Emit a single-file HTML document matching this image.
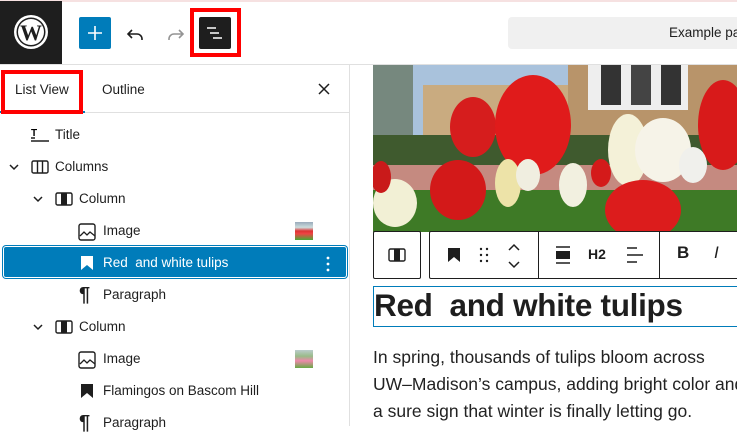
<!DOCTYPE html>
<html><head><meta charset="utf-8"><style>
*{box-sizing:border-box;margin:0;padding:0}
body{width:737px;height:426px;overflow:hidden;background:#fff;font-family:"Liberation Sans",sans-serif;color:#1e1e1e;position:relative}
.abs{position:absolute}
.row{position:absolute;left:0;width:349px;height:32px;font-size:13.5px;line-height:32px}
.row svg{position:absolute;top:8px}
.row span{position:absolute}
</style></head><body>
<div class="abs" style="left:0;top:0;width:737px;height:2px;background:#f6e1e1"></div>
<div class="abs" style="left:0;top:1px;width:62px;height:63px;background:#1e1e1e"></div>
<svg class="abs" style="left:12px;top:13px" width="38" height="38" viewBox="0 0 38 38"><circle cx="19" cy="19" r="17" fill="#fff"/><circle cx="19" cy="19" r="14.5" fill="#1e1e1e"/><circle cx="19" cy="19" r="13" fill="#fff"/><text x="19" y="27" text-anchor="middle" font-family="Liberation Serif" font-weight="bold" font-size="22" fill="#1e1e1e">W</text></svg>
<div class="abs" style="left:0;top:64px;width:737px;height:1px;background:#e0e0e0"></div>
<div class="abs" style="left:79px;top:17px;width:32px;height:32px;background:#007cba;border-radius:2px"></div>
<svg class="abs" style="left:79px;top:17px" width="32" height="32"><path d="M16 9v14M9 16h14" stroke="#fff" stroke-width="1.6"/></svg>
<svg class="abs" style="left:124px;top:22px" width="24" height="24"><path d="M8 8l-4 4 4 4M4 12h9a5 5 0 0 1 5 5v1" fill="none" stroke="#1e1e1e" stroke-width="1.6"/></svg>
<svg class="abs" style="left:163px;top:22px" width="24" height="24"><path d="M16 8l4 4-4 4M20 12h-9a5 5 0 0 0-5 5v1" fill="none" stroke="#949494" stroke-width="1.6"/></svg>
<div class="abs" style="left:190px;top:8px;width:51px;height:49px;border:4px solid #f00"></div>
<div class="abs" style="left:199px;top:17px;width:32px;height:32px;background:#1e1e1e;border-radius:2px"></div>
<svg class="abs" style="left:199px;top:17px" width="32" height="32"><path d="M8 11h9M11 16h9M14 21h9" stroke="#fff" stroke-width="1.5"/></svg>
<div class="abs" style="left:508px;top:17px;width:240px;height:32px;background:#f0f0f0;border-radius:4px;font-size:13.5px;line-height:32px;padding-left:161px;white-space:nowrap">Example page</div>
<div class="abs" style="left:349px;top:65px;width:1px;height:361px;background:#e0e0e0"></div>
<div class="abs" style="left:0;top:112px;width:349px;height:1px;background:#e0e0e0"></div>
<div class="abs" style="left:0;top:111px;width:85px;height:2px;background:#007cba"></div>
<div class="abs" style="left:1px;top:70px;width:82px;height:44px;border:4px solid #f00"></div>
<div class="abs" style="left:15px;top:82px;font-size:13.5px">List View</div>
<div class="abs" style="left:102px;top:82px;font-size:13.5px">Outline</div>
<svg class="abs" style="left:317px;top:82px" width="14" height="14"><path d="M2 2l10 10M12 2L2 12" stroke="#1e1e1e" stroke-width="1.5"/></svg>

<div class="row" style="top:119px"><svg style="left:30px" width="20" height="16"><text x="1" y="9" font-size="10" font-weight="bold" font-family="Liberation Sans">T</text><path d="M1 11h4M1 14h18" stroke="#1e1e1e" stroke-width="1.4"/></svg><span style="left:55px">Title</span></div>
<div class="row" style="top:151px"><svg style="left:8px" width="12" height="16"><path d="M2 6l4 4 4-4" fill="none" stroke="#1e1e1e" stroke-width="1.5"/></svg><svg style="left:31px" width="18" height="16"><rect x="1" y="2" width="16" height="12" rx="1.5" fill="none" stroke="#1e1e1e" stroke-width="1.4"/><path d="M6.5 2v12M11.5 2v12" stroke="#1e1e1e" stroke-width="1.4"/></svg><span style="left:55px">Columns</span></div>
<div class="row" style="top:183px"><svg style="left:32px" width="12" height="16"><path d="M2 6l4 4 4-4" fill="none" stroke="#1e1e1e" stroke-width="1.5"/></svg><svg style="left:55px" width="18" height="16"><rect x="1" y="2" width="16" height="12" rx="1.5" fill="none" stroke="#1e1e1e" stroke-width="1.4"/><rect x="6" y="2" width="6" height="12" fill="#1e1e1e"/></svg><span style="left:79px">Column</span></div>
<div class="row" style="top:215px"><svg style="left:78px" width="18" height="18"><rect x="1" y="1" width="16" height="16" rx="2" fill="none" stroke="#1e1e1e" stroke-width="1.4"/><path d="M2 13l4-4 3 3 3-3 5 4" fill="none" stroke="#1e1e1e" stroke-width="1.3"/></svg><span style="left:103px">Image</span><div class="abs" style="left:295px;top:7px;width:18px;height:18px;background:linear-gradient(#9ab 0,#cdd 30%,#d33 50%,#e44 65%,#4a3 100%)"></div></div>
<div class="abs" style="left:3px;top:246px;width:344px;height:32px;background:#007cba;border-radius:3px;box-shadow:0 0 0 1px #fff inset,0 0 0 1px #007cba"></div>
<div class="row" style="top:247px;color:#fff"><svg style="left:80px" width="14" height="16"><path d="M1 1h12v14l-6-5-6 5z" fill="#fff"/></svg><span style="left:103px">Red&nbsp; and white tulips</span><svg style="left:326px;top:9px" width="4" height="16"><circle cx="2" cy="2" r="1.4" fill="#fff"/><circle cx="2" cy="8" r="1.4" fill="#fff"/><circle cx="2" cy="14" r="1.4" fill="#fff"/></svg></div>
<div class="row" style="top:279px"><span style="left:79px;font-size:20px;font-weight:bold">¶</span><span style="left:103px">Paragraph</span></div>
<div class="row" style="top:311px"><svg style="left:32px" width="12" height="16"><path d="M2 6l4 4 4-4" fill="none" stroke="#1e1e1e" stroke-width="1.5"/></svg><svg style="left:55px" width="18" height="16"><rect x="1" y="2" width="16" height="12" rx="1.5" fill="none" stroke="#1e1e1e" stroke-width="1.4"/><rect x="6" y="2" width="6" height="12" fill="#1e1e1e"/></svg><span style="left:79px">Column</span></div>
<div class="row" style="top:343px"><svg style="left:78px" width="18" height="18"><rect x="1" y="1" width="16" height="16" rx="2" fill="none" stroke="#1e1e1e" stroke-width="1.4"/><path d="M2 13l4-4 3 3 3-3 5 4" fill="none" stroke="#1e1e1e" stroke-width="1.3"/></svg><span style="left:103px">Image</span><div class="abs" style="left:295px;top:7px;width:18px;height:18px;background:linear-gradient(#bcc 0,#9b8 35%,#e8a 60%,#6a4 100%)"></div></div>
<div class="row" style="top:375px"><svg style="left:80px" width="14" height="16"><path d="M1 1h12v14l-6-5-6 5z" fill="#1e1e1e"/></svg><span style="left:103px">Flamingos on Bascom Hill</span></div>
<div class="row" style="top:407px"><span style="left:79px;font-size:20px;font-weight:bold">¶</span><span style="left:103px">Paragraph</span></div>

<svg class="abs" style="left:373px;top:65px" width="364" height="167" viewBox="0 0 364 167">
<rect width="364" height="167" fill="#a9c2dc"/>
<rect x="50" y="20" width="314" height="80" fill="#c9ab80"/>
<rect x="195" y="0" width="169" height="100" fill="#b8946a"/>
<rect x="215" y="0" width="100" height="45" fill="#eee"/>
<rect x="228" y="0" width="20" height="40" fill="#333"/><rect x="258" y="0" width="20" height="40" fill="#444"/><rect x="288" y="0" width="20" height="40" fill="#333"/>
<rect x="0" y="0" width="40" height="90" fill="#55603f" opacity=".6"/>
<rect x="0" y="70" width="364" height="35" fill="#3f5a2e"/>
<rect x="0" y="100" width="364" height="67" fill="#c58a80"/>
<rect x="0" y="125" width="364" height="42" fill="#3e7a26"/>
<ellipse cx="100" cy="62" rx="23" ry="30" fill="#d61d1d"/>
<ellipse cx="160" cy="60" rx="38" ry="50" fill="#e01b1b"/>
<ellipse cx="255" cy="85" rx="20" ry="36" fill="#f4f1d8"/>
<ellipse cx="290" cy="85" rx="28" ry="32" fill="#f6f3e8"/>
<ellipse cx="350" cy="60" rx="25" ry="45" fill="#d81a1a"/>
<ellipse cx="85" cy="125" rx="28" ry="30" fill="#d31919"/>
<ellipse cx="270" cy="145" rx="38" ry="30" fill="#dc1c1c"/>
<ellipse cx="22" cy="138" rx="22" ry="24" fill="#f2f0d5"/>
<ellipse cx="8" cy="112" rx="10" ry="16" fill="#c91a1a"/>
<ellipse cx="135" cy="118" rx="13" ry="24" fill="#ede3a8"/>
<ellipse cx="200" cy="120" rx="14" ry="22" fill="#f2f0e0"/>
<ellipse cx="320" cy="100" rx="14" ry="18" fill="#f0f0ec"/>
<ellipse cx="228" cy="108" rx="10" ry="14" fill="#d41a1a"/>
<ellipse cx="155" cy="110" rx="12" ry="16" fill="#f0eee0"/>
</svg>
<div class="abs" style="left:373px;top:231px;width:48px;height:48px;background:#fff;border:1px solid #1e1e1e;border-radius:2px"></div>
<svg class="abs" style="left:388px;top:247px" width="18" height="16"><rect x="1" y="2" width="16" height="12" rx="1.5" fill="none" stroke="#1e1e1e" stroke-width="1.4"/><rect x="6" y="2" width="6" height="12" fill="#1e1e1e"/></svg>
<div class="abs" style="left:429px;top:231px;width:320px;height:48px;background:#fff;border:1px solid #1e1e1e;border-radius:2px"></div>
<div class="abs" style="left:538px;top:231px;width:1px;height:48px;background:#1e1e1e"></div>
<div class="abs" style="left:659px;top:231px;width:1px;height:48px;background:#1e1e1e"></div>
<svg class="abs" style="left:447px;top:247px" width="14" height="16"><path d="M1 1h12v14l-6-5-6 5z" fill="#1e1e1e"/></svg>
<svg class="abs" style="left:479px;top:246px" width="10" height="18"><g fill="#1e1e1e"><circle cx="2" cy="3" r="1.2"/><circle cx="8" cy="3" r="1.2"/><circle cx="2" cy="9" r="1.2"/><circle cx="8" cy="9" r="1.2"/><circle cx="2" cy="15" r="1.2"/><circle cx="8" cy="15" r="1.2"/></g></svg>
<svg class="abs" style="left:506px;top:242px" width="16" height="28"><path d="M3 8l5-5 5 5M3 20l5 5 5-5" fill="none" stroke="#1e1e1e" stroke-width="1.5"/></svg>
<svg class="abs" style="left:554px;top:245px" width="18" height="20"><path d="M2 2h14M2 18h14" stroke="#1e1e1e" stroke-width="1.5"/><rect x="2" y="6" width="14" height="8" fill="#1e1e1e"/></svg>
<div class="abs" style="left:588px;top:246px;font-size:14px;font-weight:bold">H2</div>
<svg class="abs" style="left:625px;top:245px" width="20" height="20"><path d="M2 3h10M2 10h16M2 17h10" stroke="#1e1e1e" stroke-width="1.5"/></svg>
<div class="abs" style="left:677px;top:243px;font-size:17px;font-weight:bold">B</div>
<div class="abs" style="left:714px;top:243px;font-size:17px;font-style:italic">I</div>
<div class="abs" style="left:373px;top:286px;width:380px;height:41px;border:1px solid #007cba"></div>
<div class="abs" style="left:374px;top:287px;font-size:31.5px;font-weight:bold;letter-spacing:-0.3px;white-space:nowrap">Red&nbsp; and white tulips</div>
<div class="abs" style="left:373px;top:344px;font-size:17.5px;line-height:27px;white-space:nowrap;color:#222">In spring, thousands of tulips bloom across<br>UW–Madison’s campus, adding bright color and<br>a sure sign that winter is finally letting go.</div>
</body></html>
